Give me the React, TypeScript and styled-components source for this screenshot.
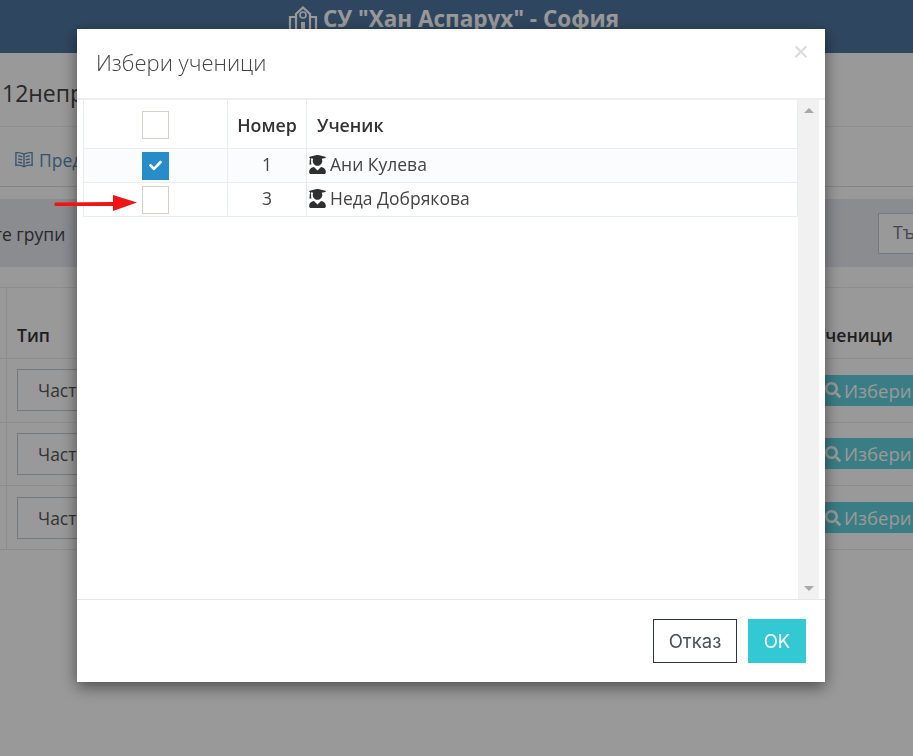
import React from 'react';
import styled, { createGlobalStyle } from 'styled-components';
import { FaUserGraduate, FaSearch, FaCheck } from 'react-icons/fa';

const GlobalStyle = createGlobalStyle`
  html, body {
    margin: 0;
    padding: 0;
    height: 100%;
    overflow: hidden;
    background: #fff;
    font-family: "Open Sans", "Liberation Sans", sans-serif;
    color: #333;
  }
`;

const Page = styled.div`
  width: 913px;
  height: 756px;
  overflow: hidden;
`;

const TopBar = styled.header`
  height: 53px;
  background: #4e76a0;
  display: flex;
  justify-content: center;
  align-items: flex-start;
  gap: 5px;
  padding: 4px 6px 0 0;
  box-sizing: border-box;
  color: #fff;
  font-size: 22.5px;
  font-weight: 700;
  line-height: 30px;
`;

const SchoolIcon = styled.svg`
  margin-top: 2px;
  flex-shrink: 0;
`;

const TitleRow = styled.div`
  height: 74px;
  padding: 25px 0 0 2px;
  box-sizing: border-box;
  border-bottom: 1px solid #eee;
  font-size: 23px;
  line-height: 30px;
  color: #444;
  white-space: nowrap;
`;

const TabRow = styled.div`
  height: 60px;
  padding: 21px 0 0 15px;
  box-sizing: border-box;
  border-bottom: 1px solid #ddd;
  display: flex;
  align-items: flex-start;
  gap: 6px;
  font-size: 17.5px;
  line-height: 24px;
  color: #5b8ab8;
`;

const BookIcon = styled.svg`
  margin-top: 3px;
  flex-shrink: 0;
`;

const FilterBand = styled.div`
  margin-top: 12px;
  height: 68px;
  background: #e6e9f1;
  display: flex;
  justify-content: space-between;
  align-items: center;
  font-size: 17.5px;
  color: #444;
`;

const BandLabel = styled.span`
  margin-left: -71px;
  padding-top: 2px;
  white-space: nowrap;
`;

const SearchBox = styled.div`
  width: 60px;
  height: 41px;
  margin-right: -25px;
  padding: 6px 14px;
  box-sizing: border-box;
  border: 1px solid #c2cad8;
  background: #fff;
  color: #777;
`;

const Groups = styled.div`
  margin-top: 20px;
`;

const GroupsHead = styled.div`
  height: 72px;
  box-sizing: border-box;
  border-top: 1px solid #e7ecf1;
  border-bottom: 1px solid #e7ecf1;
  display: flex;
  justify-content: space-between;
  font-size: 17.5px;
  font-weight: 600;
  line-height: 24px;
  color: #333;
`;

const HeadLabel = styled.span<{ $right?: boolean }>`
  align-self: flex-end;
  margin: ${p => (p.$right ? '0 20px 11px 0' : '0 auto 11px 10px')};
  white-space: nowrap;
`;

const LeadCell = styled.div`
  width: 7px;
  flex-shrink: 0;
  align-self: stretch;
  box-sizing: border-box;
  border-right: 1px solid #e7ecf1;
`;

const GroupRow = styled.div`
  height: 63.67px;
  box-sizing: border-box;
  border-bottom: 1px solid #e7ecf1;
  display: flex;
  justify-content: space-between;
  align-items: center;
`;

const TypeSelect = styled.div`
  width: 200px;
  height: 42px;
  margin: 0 auto 0 10px;
  padding: 0 20px;
  box-sizing: border-box;
  border: 1px solid #c2cad8;
  display: flex;
  align-items: center;
  font-size: 17.5px;
  color: #555;
`;

const PickButton = styled.div`
  width: 100px;
  height: 31px;
  padding-left: 12px;
  box-sizing: border-box;
  background: #62d0dc;
  color: #fff;
  display: flex;
  align-items: center;
  gap: 3px;
  font-size: 18.5px;
  white-space: nowrap;
  overflow: hidden;
`;

const Backdrop = styled.div`
  position: fixed;
  inset: 0;
  background: rgba(0, 0, 0, 0.4);
`;

const Modal = styled.div`
  position: fixed;
  left: 77px;
  top: 29px;
  width: 748px;
  height: 653px;
  background: #fff;
  box-shadow: 0 5px 15px rgba(0, 0, 0, 0.5);
  display: flex;
  flex-direction: column;
`;

const ModalHeader = styled.div`
  height: 71px;
  padding: 0 19px;
  box-sizing: border-box;
  border-bottom: 2px solid #eee;
  display: flex;
  justify-content: space-between;
  align-items: flex-start;
  flex-shrink: 0;
`;

const ModalTitle = styled.h4`
  margin: 17px 0 0;
  font-size: 22px;
  font-weight: 300;
  line-height: 32px;
  color: #444;
`;

const CloseMark = styled.span`
  margin: 9px -3px 0 0;
  font-family: "Liberation Sans", sans-serif;
  font-size: 28px;
  line-height: 28px;
  color: #dcdcdc;
`;

const ModalBody = styled.div`
  height: 499px;
  padding: 0 6px;
  box-sizing: border-box;
  display: flex;
  flex-shrink: 0;
`;

const TableArea = styled.div`
  flex: 1;
  min-width: 0;
`;

const Table = styled.table`
  width: 715px;
  border-collapse: collapse;
  table-layout: fixed;
  font-size: 17.5px;
  color: #444;
`;

const Th = styled.th<{ $w?: number; $left?: boolean }>`
  height: 48px;
  padding: 3px ${p => (p.$left ? '10px' : '0')} 0;
  box-sizing: border-box;
  width: ${p => (p.$w ? `${p.$w}px` : 'auto')};
  text-align: ${p => (p.$left ? 'left' : 'center')};
  border: 1px solid #e7ecf1;
  border-top: 0;
  font-size: 17.8px;
  font-weight: 600;
  color: #333;
`;

const Tr = styled.tr<{ $striped?: boolean }>`
  background: ${p => (p.$striped ? '#fbfcfd' : '#fff')};
`;

const Td = styled.td<{ $left?: boolean }>`
  height: 34px;
  padding: 0 ${p => (p.$left ? '2px' : '0')} 2px;
  box-sizing: border-box;
  text-align: ${p => (p.$left ? 'left' : 'center')};
  border: 1px solid #e7ecf1;
`;

const CheckCell = styled.td`
  height: 34px;
  padding: 1px 0 0;
  box-sizing: border-box;
  border: 1px solid #e7ecf1;
`;

const CheckBox = styled.span<{ $checked?: boolean }>`
  width: 27px;
  height: 28px;
  margin: 0 auto;
  box-sizing: border-box;
  border: ${p => (p.$checked ? '0' : '1px solid #d6cfc9')};
  background: ${p => (p.$checked ? '#268dc9' : '#fff')};
  color: #fff;
  display: flex;
  align-items: center;
  justify-content: center;
  font-size: 13px;
`;

const StudentName = styled.span`
  display: flex;
  align-items: center;
  gap: 4px;
  color: #444;
`;

const GradIcon = styled(FaUserGraduate)`
  width: 17px;
  height: 19px;
  color: #2f2f2f;
  flex-shrink: 0;
`;

const ScrollTrack = styled.div`
  width: 21px;
  background: #f1f1f1;
  display: flex;
  flex-direction: column;
  justify-content: space-between;
  align-items: center;
  padding: 8px 0 8px;
  box-sizing: border-box;
  flex-shrink: 0;
`;

const ScrollArrow = styled.span<{ $down?: boolean }>`
  width: 0;
  height: 0;
  border-left: 5px solid transparent;
  border-right: 5px solid transparent;
  ${p => (p.$down ? 'border-top: 5px solid #a8a8a8;' : 'border-bottom: 5px solid #a8a8a8;')}
`;

const ModalFooter = styled.div`
  flex: 1;
  padding: 19px 19px 0 0;
  box-sizing: border-box;
  border-top: 1px solid #e5e5e5;
  display: flex;
  justify-content: flex-end;
  align-items: flex-start;
  gap: 11px;
`;

const Button = styled.button<{ $primary?: boolean }>`
  height: 44px;
  width: ${p => (p.$primary ? '58px' : '84px')};
  padding: 0;
  border: ${p => (p.$primary ? '0' : '1px solid #2f353b')};
  background: ${p => (p.$primary ? '#32c8d4' : '#fff')};
  color: ${p => (p.$primary ? '#fff' : '#4a5058')};
  font-family: Inter, "Open Sans", sans-serif;
  font-size: 18.5px;
  font-weight: 400;
`;

const Arrow = styled.svg`
  position: fixed;
  left: 53px;
  top: 192px;
`;

const groupRows = [0, 1, 2];

const students = [
  { num: 1, name: 'Ани Кулева', checked: true },
  { num: 3, name: 'Неда Добрякова', checked: false },
];

export default function App() {
  return (
    <Page>
      <GlobalStyle />
      <TopBar>
        <SchoolIcon width="30" height="24" viewBox="0 0 30 24" fill="none" stroke="currentColor" strokeWidth="2.2">
          <path d="M8 24 V8 L15 1.5 L22 8 V24" />
          <path d="M8 11 H2 V24 M22 11 H28 V24" />
          <circle cx="15" cy="9" r="3" strokeWidth="1.6" />
          <path d="M15 16 V24" strokeWidth="4" />
        </SchoolIcon>
        <span>СУ "Хан Аспарух" - София</span>
      </TopBar>
      <TitleRow>12непрофилирана</TitleRow>
      <TabRow>
        <BookIcon width="18" height="17" viewBox="0 0 20 18" fill="none" stroke="currentColor" strokeWidth="1.5">
          <path d="M10 3 C7 1.5 4 1 1 1.5 V15.5 C4 15 7 15.5 10 17 C13 15.5 16 15 19 15.5 V1.5 C16 1 13 1.5 10 3 Z M10 3 V17" />
          <path d="M3.5 5 C5 5 6.5 5.3 8 6 M3.5 8.5 C5 8.5 6.5 8.8 8 9.5 M3.5 12 C5 12 6.5 12.3 8 13" />
          <path d="M16.5 5 C15 5 13.5 5.3 12 6 M16.5 8.5 C15 8.5 13.5 8.8 12 9.5 M16.5 12 C15 12 13.5 12.3 12 13" />
        </BookIcon>
        <span>Предмети</span>
      </TabRow>
      <FilterBand>
        <BandLabel>Покажете групи</BandLabel>
        <SearchBox>Търси</SearchBox>
      </FilterBand>
      <Groups>
        <GroupsHead>
          <LeadCell />
          <HeadLabel>Тип</HeadLabel>
          <HeadLabel $right>Ученици</HeadLabel>
        </GroupsHead>
        {groupRows.map(i => (
          <GroupRow key={i}>
            <LeadCell />
            <TypeSelect>Частна</TypeSelect>
            <PickButton>
              <FaSearch size={16} />
              <span>Избери</span>
            </PickButton>
          </GroupRow>
        ))}
      </Groups>

      <Backdrop />
      <Modal>
        <ModalHeader>
          <ModalTitle>Избери ученици</ModalTitle>
          <CloseMark>×</CloseMark>
        </ModalHeader>
        <ModalBody>
          <TableArea>
            <Table>
              <thead>
                <tr>
                  <Th $w={144}>
                    <CheckBox />
                  </Th>
                  <Th $w={79}>Номер</Th>
                  <Th $left>Ученик</Th>
                </tr>
              </thead>
              <tbody>
                {students.map((s, i) => (
                  <Tr key={s.num} $striped={i === 0}>
                    <CheckCell>
                      <CheckBox $checked={s.checked}>{s.checked && <FaCheck />}</CheckBox>
                    </CheckCell>
                    <Td>{s.num}</Td>
                    <Td $left>
                      <StudentName>
                        <GradIcon />
                        {s.name}
                      </StudentName>
                    </Td>
                  </Tr>
                ))}
              </tbody>
            </Table>
          </TableArea>
          <ScrollTrack>
            <ScrollArrow />
            <ScrollArrow $down />
          </ScrollTrack>
        </ModalBody>
        <ModalFooter>
          <Button>Отказ</Button>
          <Button $primary>OK</Button>
        </ModalFooter>
      </Modal>
      <Arrow width="86" height="22" viewBox="0 0 86 22">
        <path d="M2 10.5 L60 10 L60 3 L84 10.5 L60 19 L60 14 L2 14 Q0.5 12 2 10.5 Z" fill="#f01414" />
      </Arrow>
    </Page>
  );
}
